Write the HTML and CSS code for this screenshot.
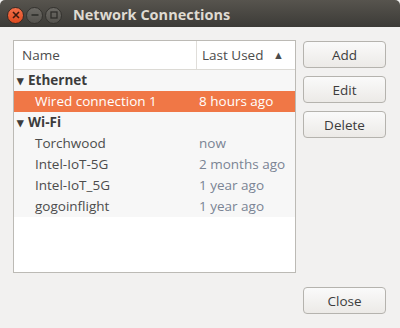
FILE: index.html
```html
<!DOCTYPE html>
<html lang="en">

<head>
    <meta charset="UTF-8">
    <title>Network Connections</title>
    <link rel="stylesheet" href="styles.css">
</head>

<body>
    <div class="window">
        <header class="titlebar">
            <div class="wm-buttons">
                <span class="wm-btn close">
                    <svg width="8" height="8" viewBox="0 0 8 8"><path d="M1 1L7 7M7 1L1 7" stroke="#3a1a10" stroke-width="1.6"/></svg>
                </span>
                <span class="wm-btn">
                    <svg width="8" height="8" viewBox="0 0 8 8"><path d="M0.5 4H7.5" stroke="#2e2d2a" stroke-width="1.6"/></svg>
                </span>
                <span class="wm-btn">
                    <svg width="8" height="8" viewBox="0 0 8 8"><rect x="1" y="1" width="6" height="6" fill="none" stroke="#2e2d2a" stroke-width="1.3"/></svg>
                </span>
            </div>
            <h1 class="title">Network Connections</h1>
        </header>

        <main class="content">
            <div class="top">
                <div class="list">
                    <div class="list-head">
                        <div class="col-name">Name</div>
                        <div class="col-used">Last Used <span class="sort">&#9650;</span></div>
                    </div>

                    <div class="row group"><span class="expander">&#9662;</span>Ethernet</div>
                    <div class="row item selected"><span class="name">Wired connection 1</span><span class="used">8 hours ago</span></div>

                    <div class="row group"><span class="expander">&#9662;</span>Wi-Fi</div>
                    <div class="row item"><span class="name">Torchwood</span><span class="used">now</span></div>
                    <div class="row item"><span class="name">Intel-IoT-5G</span><span class="used">2 months ago</span></div>
                    <div class="row item"><span class="name">Intel-IoT_5G</span><span class="used">1 year ago</span></div>
                    <div class="row item"><span class="name">gogoinflight</span><span class="used">1 year ago</span></div>
                </div>

                <div class="actions">
                    <button>Add</button>
                    <button>Edit</button>
                    <button>Delete</button>
                </div>
            </div>

            <div class="bottom">
                <button>Close</button>
            </div>
        </main>
    </div>
</body>

</html>
```

FILE: styles.css
```css
body {
    margin: 0;
    padding: 0;
    background-color: #f2f1f0;
    font-family: 'Open Sans', 'Noto Sans', sans-serif;
    font-size: 13.5px;
    color: #3c3c3c;
}

.window {
    width: 400px;
    height: 328px;
    display: flex;
    flex-direction: column;
}

.titlebar {
    height: 27px;
    display: flex;
    align-items: center;
    background: linear-gradient(#57544e, #3c3b37);
    border-radius: 5px 5px 0 0;
}

.wm-buttons {
    display: flex;
    gap: 2px;
    padding-left: 7px;
}

.wm-btn {
    width: 15px;
    height: 15px;
    border-radius: 50%;
    border: 1px solid #34332f;
    background: linear-gradient(#6b6964, #55534e);
    display: flex;
    align-items: center;
    justify-content: center;
    margin-top: 3px;
}

.wm-btn.close {
    background: linear-gradient(#f2704a, #df4a1f);
    border-color: #3a2a24;
}

.title {
    margin: 2px 0 0 11px;
    font-size: 14.5px;
    font-weight: bold;
    color: #dfdbd2;
}

.content {
    flex: 1;
    display: flex;
    flex-direction: column;
    padding: 13px 14px 14px 13px;
}

.top {
    display: flex;
    gap: 7px;
}

.list {
    width: 281px;
    height: 231px;
    border: 1px solid #bcbab5;
    background-color: #fff;
}

.list-head {
    display: flex;
    height: 28px;
    border-bottom: 1px solid #dcdad5;
    color: #4c4c4c;
}

.col-name {
    width: 174px;
    padding-left: 8px;
    border-right: 1px solid #e0deda;
    line-height: 28px;
}

.col-used {
    flex: 1;
    padding-left: 5px;
    line-height: 28px;
}

.sort {
    font-size: 11px;
    margin-left: 6px;
    vertical-align: 1px;
}

.row {
    height: 21px;
    line-height: 21px;
    display: flex;
    background-color: #f7f7f7;
}

.group {
    font-weight: bold;
    padding-left: 3px;
    color: #3c3c3c;
}

.expander {
    font-size: 13px;
    width: 10px;
    margin-right: 1px;
}

.item .name {
    width: 164px;
    padding-left: 21px;
    color: #4c4c4c;
}

.item .used {
    color: #7a8494;
}

.selected {
    background-color: #f07746;
}

.selected .name,
.selected .used {
    color: #fff;
}

.actions {
    display: flex;
    flex-direction: column;
    gap: 8px;
    padding-top: 1px;
}

button {
    width: 83px;
    height: 27px;
    font-family: inherit;
    font-size: 13.5px;
    color: #3c3c3c;
    background: linear-gradient(#fafafa, #eceae7);
    border: 1px solid #b5b3ae;
    border-radius: 4px;
    padding: 0;
}

.bottom {
    display: flex;
    justify-content: flex-end;
    margin-top: auto;
}
```
